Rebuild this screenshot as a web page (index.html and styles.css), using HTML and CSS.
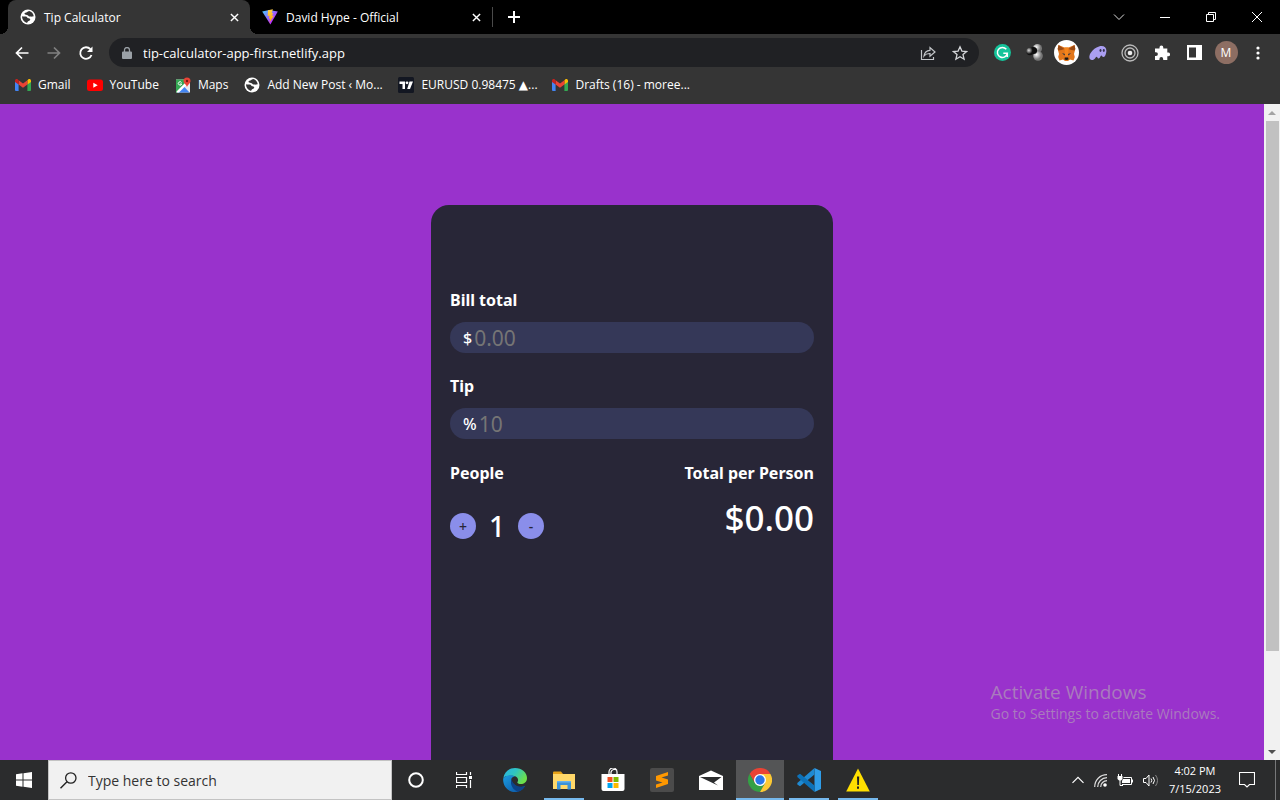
FILE: index.html
```html
<!DOCTYPE html>
<html lang="en">
<head>
  <meta charset="UTF-8">
  <meta name="viewport" content="width=device-width, initial-scale=1.0">
  <title>Tip Calculator</title>
  <link rel="stylesheet" href="styles.css">
</head>
<body>
  <svg class="sprite" aria-hidden="true">
    <symbol id="globe" viewBox="0 0 16 16">
      <circle cx="8" cy="8" r="7.500" fill="#fff"/>
      <path d="M9.200 2c-2 .3-2.200 1.600-3.800 1.800-1 .2-1.200 1.200-.3 1.700 1.200.6 2.500.2 3.200 1.200.5.800 1.800.7 2.700.9 1 .3 1.500-.4 2.800-.2C13.500 4.500 11.500 2.500 9.200 2z" fill="#353535"/>
      <path d="M2.100 7.200c-.2 3.200 2 6 5 6.700.2-1 .8-1.300 1.600-1.800.9-.6 1.700-.9 1.500-1.800-.2-1-1.400-.9-2.200-1.100-1-.2-1-1.300-2-1.600-1.300-.4-2.600 0-3.900-.4z" fill="#353535"/>
    </symbol>
    <symbol id="gmail" viewBox="0 0 16 12">
      <path d="M0 2v9a1 1 0 0 0 1 1h2.600V4.700z" fill="#4285f4"/>
      <path d="M16 2v9a1 1 0 0 1-1 1h-2.600V4.700z" fill="#34a853"/>
      <path d="M12.400 1.300V5.500L16 2.900V1.700C16 .2 14.300-.5 13.200.4z" fill="#fbbc04"/>
      <path d="M3.600 5.500V1.300L8 4.600l4.400-3.300v4.200L8 8.800z" fill="#ea4335"/>
      <path d="M0 1.700v1.200l3.600 2.600V1.300L2.800.4C1.700-.5 0 .2 0 1.700z" fill="#c5221f"/>
    </symbol>
    <symbol id="cross" viewBox="0 0 10 10">
      <path d="M1 1l8 8M9 1L1 9" stroke="#fff" stroke-width="1.600" fill="none"/>
    </symbol>
  </svg>

  <header class="browser">
    <div class="tabs">
      <div class="tab active">
        <svg class="favicon"><use href="#globe"/></svg>
        <span class="tab_title">Tip Calculator</span>
        <button class="tab_close" aria-label="Close tab"><svg width="9" height="9"><use href="#cross"/></svg></button>
      </div>
      <div class="tab">
        <svg class="favicon" viewBox="0 0 16 16">
          <defs>
            <linearGradient id="vite" x1="0" y1="0" x2="1" y2="1"><stop offset="0" stop-color="#41d1ff"/><stop offset=".7" stop-color="#bd34fe"/></linearGradient>
            <linearGradient id="bolt" x1="0" y1="0" x2="0" y2="1"><stop offset="0" stop-color="#ffd04a"/><stop offset="1" stop-color="#ffa800"/></linearGradient>
          </defs>
          <path d="M.2 2.500L7 1l8.800 1.500L8.400 15.500z" fill="url(#vite)"/>
          <path d="M10.900.2L6 1.200 5.700 7l1.700-.3-.4 3 1.300-.3-.8 4L12 6.600l-2 .3L11.200 4l-1.500.2z" fill="url(#bolt)"/>
        </svg>
        <span class="tab_title">David Hype - Official</span>
        <button class="tab_close" aria-label="Close tab"><svg width="9" height="9"><use href="#cross"/></svg></button>
      </div>
      <button class="new_tab" aria-label="New tab">
        <svg width="14" height="14" viewBox="0 0 14 14"><path d="M7 1v12M1 7h12" stroke="#fff" stroke-width="2"/></svg>
      </button>
      <div class="window_controls">
        <button aria-label="Search tabs"><svg width="12" height="12" viewBox="0 0 12 12"><path d="M1 3.500l5 5 5-5" stroke="#ddd" fill="none"/></svg></button>
        <button aria-label="Minimize"><svg width="10" height="10" viewBox="0 0 10 10"><path d="M0 5.500h10" stroke="#fff"/></svg></button>
        <button aria-label="Restore"><svg width="10" height="10" viewBox="0 0 10 10"><path d="M.5 2.500h7v7h-7zM2.500 2.500v-2h7v7h-2" stroke="#fff" fill="none"/></svg></button>
        <button aria-label="Close"><svg width="10" height="10" viewBox="0 0 10 10"><path d="M0 0l10 10M10 0L0 10" stroke="#fff"/></svg></button>
      </div>
    </div>

    <div class="toolbar">
      <button class="tool" aria-label="Back"><svg width="16" height="16" viewBox="0 0 16 16"><path d="M14.500 8H2.500M8 2.500L2.500 8 8 13.500" stroke="#fff" stroke-width="1.700" fill="none"/></svg></button>
      <button class="tool" aria-label="Forward"><svg width="16" height="16" viewBox="0 0 16 16"><path d="M1.500 8h12M8 2.500L13.500 8 8 13.500" stroke="#818181" stroke-width="1.700" fill="none"/></svg></button>
      <button class="tool" aria-label="Reload"><svg width="16" height="16" viewBox="0 0 16 16"><path d="M13.500 10A5.800 5.800 0 1 1 12.400 4.200" stroke="#fff" stroke-width="1.800" fill="none"/><path d="M14.500 1.500v5.500H9z" fill="#fff"/></svg></button>
      <div class="omnibox">
        <svg width="10" height="12" viewBox="0 0 10 12"><path d="M1 4.500h8a1 1 0 0 1 1 1V11a1 1 0 0 1-1 1H1a1 1 0 0 1-1-1V5.500a1 1 0 0 1 1-1z" fill="#9aa0a6"/><path d="M2.500 5V3a2.500 2.500 0 0 1 5 0v2" stroke="#9aa0a6" stroke-width="1.300" fill="none"/></svg>
        <input class="url" type="text" value="tip-calculator-app-first.netlify.app" aria-label="Address">
        <button class="tool" aria-label="Share"><svg width="16" height="16" viewBox="0 0 16 16"><path d="M1.500 5v9.500h12V12M4 11c.4-3.500 2.500-5.500 6-5.700V2.500L15 7l-5 4.300V8.500C7.500 8.400 5.500 9 4 11z" stroke="#c4c7ca" stroke-width="1.200" fill="none"/></svg></button>
        <button class="tool" aria-label="Bookmark"><svg width="16" height="16" viewBox="0 0 16 16"><path d="M8 1.800l1.900 4.300 4.700.4-3.600 3.100 1.100 4.600L8 11.700l-4.100 2.500L5 9.600 1.400 6.500l4.700-.4z" stroke="#d5d7da" stroke-width="1.300" fill="none"/></svg></button>
      </div>
      <button class="tool" aria-label="Grammarly"><svg width="17" height="17" viewBox="0 0 17 17"><circle cx="8.500" cy="8.500" r="8.500" fill="#15c39a"/><path d="M12.300 5.300A5 5 0 1 0 13.300 9.300H9.300M13.300 9v4" stroke="#fff" stroke-width="1.500" fill="none"/></svg></button>
      <button class="tool" aria-label="Molecules"><svg width="17" height="17" viewBox="0 0 17 17">
        <defs><radialGradient id="ball" cx=".35" cy=".35"><stop offset="0" stop-color="#fff"/><stop offset="1" stop-color="#777"/></radialGradient><radialGradient id="ball_dark" cx=".35" cy=".35"><stop offset="0" stop-color="#ddd"/><stop offset="1" stop-color="#111"/></radialGradient></defs>
        <circle cx="11.500" cy="4.500" r="4.500" fill="url(#ball)"/><circle cx="12" cy="12" r="4.800" fill="url(#ball)"/><circle cx="7.500" cy="6.500" r="3.600" fill="#0c0c0c"/><circle cx="4" cy="7.500" r="3.700" fill="url(#ball_dark)"/></svg></button>
      <button class="tool" aria-label="MetaMask"><svg width="25" height="25" viewBox="0 0 25 25"><circle cx="12.500" cy="12.500" r="12.500" fill="#fff"/><path d="M4.500 5l6 2.500h4l6-2.500.8 4-1.300 5 .8 3-1.300 3.500-3.500-1-2 1.500h-3l-2-1.500-3.500 1L4.200 17 5 14 3.700 9z" fill="#e2761b"/><path d="M4.500 5l6 4-3 1-3 .5L3.700 9zM20.500 5l-6 4 3 1 3 .5.800-1.500z" fill="#9a4a14"/><path d="M10.500 7.500h4l-.5 9h-3z" fill="#f6851b"/><path d="M8 13l3 1-.5 1.500zM17 13l-3 1 .5 1.500z" fill="#233447"/><path d="M10.800 17.500h3.400l.3 2-2 .5-2-.5z" fill="#161616"/></svg></button>
      <button class="tool" aria-label="Phantom"><svg width="18" height="16" viewBox="0 0 18 16"><path d="M10 1.500c5-1.500 8 1.500 7.300 5.500-.5 3-1.500 5-3 5-1.300 0-1-1.500-2-1.500s-1 3-2.800 3c-1.300 0-.8-1.800-1.800-1.800-1.200 0-1.700 3.300-4.700 3.300C-.5 15-.2 10.500 2 7.500c2-2.800 4.500-5 8-6z" fill="#ab9ff2"/><ellipse cx="11.500" cy="5.500" rx="1" ry="1.400" fill="#35324f"/><ellipse cx="14.800" cy="5.500" rx="1" ry="1.400" fill="#35324f"/></svg></button>
      <button class="tool" aria-label="Orbit"><svg width="18" height="18" viewBox="0 0 18 18"><g fill="none" stroke="#bbb" stroke-width="1.300"><circle cx="9" cy="9" r="8"/><circle cx="9" cy="9" r="5"/></g><circle cx="9" cy="9" r="2.300" fill="#eee"/></svg></button>
      <button class="tool" aria-label="Extensions"><svg width="16" height="16" viewBox="0 0 16 16"><path d="M1 3.500h4.500V2.400a1.900 1.900 0 0 1 3.800 0v1.100h4v4h.9a1.900 1.900 0 0 1 0 3.800h-.9V15H9.200v-1a1.900 1.900 0 0 0-3.800 0v1H1v-4h1a1.900 1.900 0 0 0 0-3.800H1z" fill="#fff"/></svg></button>
      <button class="tool" aria-label="Side panel"><svg width="15" height="15" viewBox="0 0 15 15"><path d="M0 0h15v15H0zM2 2.500v10h7v-10z" fill="#fff" fill-rule="evenodd"/></svg></button>
      <button class="tool" aria-label="Profile"><span class="avatar">M</span></button>
      <button class="tool" aria-label="Menu"><svg width="4" height="16" viewBox="0 0 4 16"><g fill="#fff"><circle cx="2" cy="3" r="1.600"/><circle cx="2" cy="8" r="1.600"/><circle cx="2" cy="13" r="1.600"/></g></svg></button>
    </div>

    <nav class="bookmarks">
      <a href="#"><svg class="favicon"><use href="#gmail"/></svg><span>Gmail</span></a>
      <a href="#"><svg class="favicon" viewBox="0 0 16 16"><rect y="2.500" width="16" height="11.500" rx="2.500" fill="#f00"/><path d="M6.300 5.800v5l4.400-2.500z" fill="#fff"/></svg><span>YouTube</span></a>
      <a href="#"><svg class="favicon" viewBox="0 0 16 16"><path d="M1 2.500h14v13H1z" fill="#e8eaed"/><path d="M1 2.500h9.500L11 7 2 15.500H1z" fill="#34a853"/><path d="M2.500 15.500L8.500 9l6 6.500z" fill="#4285f4"/><path d="M1.500 14.500l9-9 1.500 2-8 8H2z" fill="#fff"/><path d="M6.500 5.500a1.700 1.700 0 1 0 .2 1.500H5" stroke="#fff" fill="none"/><path d="M12 .5a3.500 3.500 0 0 1 3.500 3.500c0 2.500-2.500 3-3.500 6-1-3-3.500-3.500-3.500-6A3.500 3.500 0 0 1 12 .5z" fill="#ea4335"/><circle cx="12" cy="4" r="1.200" fill="#7a1712"/></svg><span>Maps</span></a>
      <a class="long" href="#"><svg class="favicon"><use href="#globe"/></svg><span>Add New Post ‹ Mo...</span></a>
      <a class="long" href="#"><svg class="favicon" viewBox="0 0 16 16"><rect width="16" height="16" rx="1.500" fill="#131722"/><path d="M1.500 4.500H7V12H4.500V7h-3zM11.500 4.500H15L12 12H9.200z" fill="#fff"/><circle cx="9" cy="5.800" r="1.400" fill="#fff"/></svg><span>EURUSD 0.98475 ▲...</span></a>
      <a class="long" href="#"><svg class="favicon"><use href="#gmail"/></svg><span>Drafts (16) - moree...</span></a>
    </nav>
  </header>

  <div class="viewport">
    <main class="page">
      <form class="card">
        <label for="bill">Bill total</label>
        <div class="field">
          <span>$</span>
          <input id="bill" type="text" placeholder="0.00">
        </div>
        <label for="tip">Tip</label>
        <div class="field">
          <span>%</span>
          <input id="tip" type="text" placeholder="10">
        </div>
        <div class="result">
          <div>
            <h2>People</h2>
            <div class="counter">
              <button type="button">+</button>
              <span>1</span>
              <button type="button">-</button>
            </div>
          </div>
          <div class="total">
            <h2>Total per Person</h2>
            <p>$0.00</p>
          </div>
        </div>
      </form>
    </main>
    <div class="scrollbar">
      <svg viewBox="0 0 16 16"><path d="M4 11h8L8 7z" fill="#a3a3a3"/></svg>
      <div class="track"><div class="thumb"></div></div>
      <svg viewBox="0 0 16 16"><path d="M4 6h8l-4 4z" fill="#505050"/></svg>
    </div>
    <div class="watermark">
      <p>Activate Windows</p>
      <small>Go to Settings to activate Windows.</small>
    </div>
  </div>

  <footer class="taskbar">
    <button class="app" aria-label="Start"><svg width="16" height="16" viewBox="0 0 16 16"><path d="M0 2.200L6.500 1.300v6.200H0zM7.500 1.200L16 0v7.500H7.500zM0 8.500h6.500v6.200L0 13.800zM7.500 8.500H16V16l-8.500-1.200z" fill="#fff"/></svg></button>
    <label class="search">
      <svg width="17" height="17" viewBox="0 0 17 17"><circle cx="10.800" cy="6" r="5.200" stroke="#222" stroke-width="1.300" fill="none"/><path d="M7 9.800L.5 16.300" stroke="#222" stroke-width="1.400"/></svg>
      <input type="text" placeholder="Type here to search" aria-label="Search">
    </label>
    <button class="app" aria-label="Cortana"><svg width="16" height="16" viewBox="0 0 16 16"><circle cx="8" cy="8" r="6.800" stroke="#fff" stroke-width="2" fill="none"/></svg></button>
    <button class="app" aria-label="Task view"><svg width="16" height="16" viewBox="0 0 16 16"><path d="M.5 0v2.500h10V0M.5 16v-2.500h10V16M.5 5.500h10v5H.500zM14.500 0v3M14.500 8v8" stroke="#fff" stroke-width="1.200" fill="none"/><path d="M13 4h3v3h-3z" fill="#fff"/></svg></button>
    <div class="apps">
      <button class="app" aria-label="Edge"><svg width="24" height="24" viewBox="0 0 24 24">
        <defs><linearGradient id="edge_top" x1="0" y1="0" x2="1" y2=".5"><stop offset="0" stop-color="#2bb3e8"/><stop offset=".5" stop-color="#2fc5c0"/><stop offset="1" stop-color="#6ddf4b"/></linearGradient><linearGradient id="edge_low" x1="0" y1="0" x2="1" y2="1"><stop offset="0" stop-color="#1b9de2"/><stop offset="1" stop-color="#0b4f9e"/></linearGradient></defs>
        <path d="M.3 10C1.500 4 6 0 12 0c7 0 12 4.800 12 10 0 4-3 6-6.200 6-2.500 0-4-1-3.300-2 1.300-2 .5-5.500-3.500-6C7 7.500 2 8 .300 10z" fill="url(#edge_top)"/>
        <path d="M.200 10.500C2 7.500 8 6 12 8.500c-4 0-6 5 .2 9 3 2 7 2 10 .2C20 21.500 16.500 24 12 24 5 24-.5 18 .200 10.500z" fill="url(#edge_low)"/>
        <path d="M8.500 11.500c-2 5 1.500 10.500 6.500 12.200 3-.7 5.500-2.700 7.200-6-5 2.500-11.500.3-13.700-6.200z" fill="#0d4388"/></svg></button>
      <button class="app open" aria-label="File Explorer"><svg width="22" height="19" viewBox="0 0 22 19"><path d="M0 1.500Q0 .5 1 .5h7l2 2.500H0z" fill="#e8a317"/><path d="M0 3h22v15H0z" fill="#ffd869"/><path d="M4 10h14v8.500h-3.500V14h-7v4.500H4z" fill="#3b92d8"/><path d="M4 10h14v1.500H4z" fill="#66b2ec"/></svg></button>
      <button class="app" aria-label="Store"><svg width="24" height="24" viewBox="0 0 24 24"><path d="M8 7V4a4 4 0 0 1 8 0v3M10 7V4a4 4 0 0 1 6-2" stroke="#fff" stroke-width="1.200" fill="none"/><path d="M.5 6h23v15a2 2 0 0 1-2 2h-19a2 2 0 0 1-2-2z" fill="#fff"/><path d="M6.500 9h5v5h-5z" fill="#f25022"/><path d="M12.500 9h5v5h-5z" fill="#7fba00"/><path d="M6.500 15h5v5h-5z" fill="#00a4ef"/><path d="M12.500 15h5v5h-5z" fill="#ffb900"/></svg></button>
      <button class="app" aria-label="Sublime Text"><svg width="24" height="24" viewBox="0 0 24 24"><rect width="24" height="24" rx="2" fill="#4b4b4b"/><path d="M18 4L6 8v4.500l6.500 2L6 16.500V20l12-4v-4.500l-6.500-2L18 7.500z" fill="#ff9800"/></svg></button>
      <button class="app" aria-label="Mail"><svg width="24" height="20" viewBox="0 0 24 20"><path d="M0 6L12 .5 24 6v14H0z" fill="#fff"/><path d="M1 7h21.500L15 12.500l4 3z" fill="#2b2c2d"/></svg></button>
      <button class="app open current" aria-label="Chrome"><svg width="24" height="24" viewBox="0 0 24 24"><path d="M1.600 6A12 12 0 0 1 22.400 6H12L6.800 15z" fill="#ea4335"/><path d="M1.600 6a12 12 0 0 0 10.400 18l5.200-9-10.400 0z" fill="#34a045"/><path d="M12 6h10.400A12 12 0 0 1 12 24l5.200-9z" fill="#fcc934"/><circle cx="12" cy="12" r="6" fill="#fff"/><circle cx="12" cy="12" r="4.700" fill="#2a76e8"/></svg></button>
      <button class="app open" aria-label="VS Code"><svg width="24" height="24" viewBox="0 0 24 24"><path d="M17.500 0L24 3v18l-6.500 3z" fill="#2f9de8"/><path d="M17.500 0v6.500L3 18.300.300 16.500v-1.500z" fill="#1f8ad2"/><path d="M.300 7.500L3 5.700l14.500 11.800V24L.300 9z" fill="#0d72b9"/></svg></button>
      <button class="app open" aria-label="Warning"><svg width="24" height="24" viewBox="0 0 24 24"><path d="M12 .5L23.800 23.500H.2z" fill="#ffdf00"/><path d="M11 8.500h2.200l-.3 8.500h-1.600zM11 18.500h2v2.200h-2z" fill="#222"/></svg></button>
    </div>
    <div class="tray">
      <svg width="12" height="8" viewBox="0 0 12 8"><path d="M.500 6.800L6 1.300l5.500 5.500" stroke="#fff" stroke-width="1.200" fill="none"/></svg>
      <svg width="13" height="13" viewBox="0 0 13 13"><g fill="none" stroke="#ddd" stroke-width="1.200"><path d="M.700 13C.700 6 6 .700 13 .700M3.700 13c0-5 4-9.300 9.300-9.300M6.700 13c0-3.500 2.800-6.300 6.300-6.300"/></g><circle cx="11" cy="11" r="1.800" fill="#fff"/></svg>
      <svg width="16" height="13" viewBox="0 0 16 13"><path d="M1.500 0v2M4.500 0v2M3 6v5.500h3M6.500 3.500h8v7H5" stroke="#fff" fill="none"/><path d="M.500 2h5v3L4 6.500H2L.500 5zM6 5h7v4H5V7zM15 5.500h1v3h-1z" fill="#fff"/></svg>
      <svg width="16" height="13" viewBox="0 0 16 13"><path d="M.500 4.500h2.500L6 1v11L3 8.500H.500z" stroke="#fff" fill="none"/><path d="M8 4.500q1.500 2 0 4M10 3q3 3.500 0 7" stroke="#fff" fill="none"/><path d="M12.500 1q4 5.500 0 11" stroke="#888" fill="none"/></svg>
      <div class="clock"><time>4:02 PM</time><time>7/15/2023</time></div>
      <svg class="notes" width="16" height="16" viewBox="0 0 16 16"><path d="M.500 .500h15v12H10.500L8 15l-2.500-2.500h-5z" stroke="#fff" stroke-width="1.100" fill="none"/></svg>
    </div>
  </footer>
</body>
</html>
```
FILE: styles.css
```css
*{
  margin: 0;
  padding: 0;
  box-sizing: border-box;
}

body{
  display: flex;
  flex-direction: column;
  height: 100vh;
  overflow: hidden;
  font-family: "Open Sans", "Noto Sans", "DejaVu Sans", sans-serif;
  font-size: 12px;
  color: #fff;
}

button, input{
  border: none;
  outline: none;
  background: none;
  font-family: inherit;
  color: inherit;
}

button{
  display: flex;
  justify-content: center;
  align-items: center;
}

svg{
  flex-shrink: 0;
}

.sprite{
  display: none;
}

.favicon{
  width: 16px;
  height: 16px;
}

/* browser */
.browser{
  background: #353535;
}

.tabs{
  display: flex;
  align-items: center;
  height: 34px;
  padding-left: 8px;
  background: #000;
}

.tab{
  display: flex;
  align-items: center;
  gap: 8px;
  position: relative;
  width: 242px;
  height: 34px;
  padding: 0 11px 0 12px;
}

.tab.active{
  background: #353535;
  border-radius: 8px 8px 0 0;
}

/* flared bottom corners of the open tab */
.tab.active::before,
.tab.active::after{
  content: "";
  position: absolute;
  bottom: 0;
  width: 8px;
  height: 8px;
}

.tab.active::before{
  right: 100%;
  background: radial-gradient(circle at 0 0, #000 8px, #353535 8px);
}

.tab.active::after{
  left: 100%;
  background: radial-gradient(circle at 100% 0, #000 8px, #353535 8px);
}

.tab_title{
  flex: 1;
}

.tab_close{
  width: 10px;
  height: 16px;
}

.new_tab{
  width: 43px;
  height: 20px;
  border-left: 1px solid #4a4a4a;
}

.window_controls{
  display: flex;
  margin-left: auto;
}

.window_controls button{
  width: 46px;
  height: 30px;
}

.toolbar{
  display: flex;
  align-items: center;
  height: 37px;
  padding: 0 6px;
}

.tool{
  width: 32px;
  height: 28px;
  flex-shrink: 0;
}

.omnibox{
  flex: 1;
  display: flex;
  align-items: center;
  height: 29px;
  margin: 0 7px;
  padding: 0 3px 0 13px;
  border-radius: 15px;
  background: #202124;
}

.url{
  flex: 1;
  margin-left: 11px;
  font-size: 13px;
}

.avatar{
  width: 23px;
  height: 23px;
  border-radius: 50%;
  background: #8d6e63;
  font-size: 12px;
  line-height: 23px;
}

.bookmarks{
  display: flex;
  align-items: center;
  gap: 16px;
  height: 33px;
  padding: 0 15px 6px;
}

.bookmarks a{
  display: flex;
  align-items: center;
  gap: 7px;
  color: #fff;
  text-decoration: none;
  white-space: nowrap;
}

.bookmarks .long{
  width: 138px;
}

/* page */
.viewport{
  flex: 1;
  display: flex;
  min-height: 0;
  position: relative;
}

.page{
  flex: 1;
  padding-top: 101px;
  overflow: hidden;
  background: #9932cc;
  font-family: "Noto Sans", sans-serif;
}

.card{
  width: 402px;
  min-height: 640px;
  margin: 0 auto;
  padding: 83px 19px;
  border-radius: 18px;
  background: #282637;
}

.card label,
.card h2{
  display: block;
  font-size: 16px;
  font-weight: bold;
  line-height: 24px;
}

.field{
  display: flex;
  align-items: center;
  height: 31px;
  margin: 10px 0 21px;
  padding: 0 13px;
  border-radius: 16px;
  background: #353858;
  font-size: 16px;
  font-weight: 500;
}

.field input{
  flex: 1;
  margin-left: 2px;
  font-size: 21px;
}

.field input::placeholder{
  color: #757575;
}

.result{
  display: flex;
  justify-content: space-between;
  padding-top: 1px;
}

.counter{
  display: flex;
  align-items: center;
  gap: 13px;
  height: 26px;
  margin-top: 28px;
  font-size: 28px;
  font-weight: 500;
}

.counter button{
  width: 26px;
  height: 26px;
  border-radius: 50%;
  background: #8a8eea;
  color: #282637;
  font-size: 14px;
  font-weight: 500;
}

.total{
  text-align: right;
}

.total p{
  margin-top: 8px;
  font-size: 35px;
  font-weight: 500;
  line-height: 50px;
}

.scrollbar{
  display: flex;
  flex-direction: column;
  width: 16px;
  background: #f1f1f1;
}

.scrollbar svg{
  width: 16px;
  height: 16px;
}

.track{
  flex: 1;
  padding: 1px 1px 0 2px;
}

.thumb{
  height: 85%;
  background: #c1c1c1;
}

.watermark{
  position: absolute;
  right: 60px;
  bottom: 36px;
  color: #a97bbd;
}

.watermark p{
  font-size: 19px;
  line-height: 24px;
}

.watermark small{
  font-size: 14px;
  line-height: 20px;
}

/* taskbar */
.taskbar{
  display: flex;
  height: 40px;
  background: #2b2c2d;
}

.app{
  width: 48px;
  height: 40px;
}

.search{
  display: flex;
  align-items: center;
  gap: 11px;
  width: 344px;
  padding: 0 11px;
  border: 1px solid #c3c3c3;
  background: #f1f1f1;
}

.search input{
  flex: 1;
  font-size: 14px;
}

.search input::placeholder{
  color: #333;
}

.apps{
  display: flex;
  gap: 1px;
  margin-left: 3px;
}

.open{
  background: linear-gradient(#76b9ed, #76b9ed) center bottom / 40px 2px no-repeat;
}

.current{
  background-color: #545556;
  background-size: 48px 2px;
}

.tray{
  display: flex;
  align-items: center;
  gap: 10px;
  margin-left: auto;
  margin-right: 4px;
  padding-right: 20px;
  border-right: 1px solid #77787a;
}

.clock{
  display: flex;
  flex-direction: column;
  align-items: center;
  font-size: 11px;
  line-height: 18px;
}

.notes{
  margin-left: 8px;
}
```
